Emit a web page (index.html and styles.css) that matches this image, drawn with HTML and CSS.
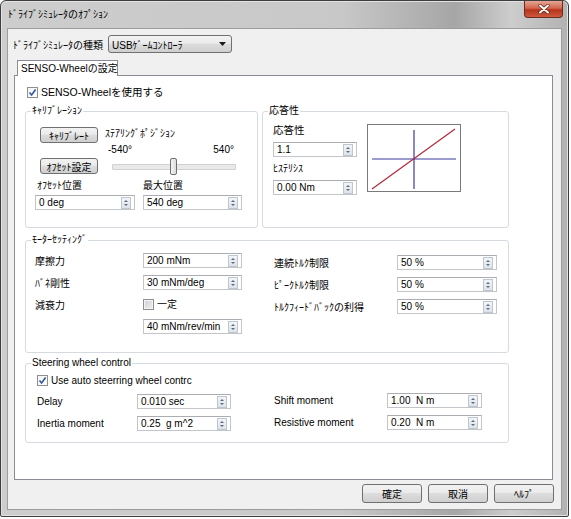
FILE: index.html
```html
<!DOCTYPE html>
<html lang="ja">
<head>
<meta charset="utf-8">
<title>ﾄﾞﾗｲﾌﾞｼﾐｭﾚｰﾀのｵﾌﾟｼｮﾝ</title>
<link rel="stylesheet" href="styles.css">
</head>
<body>
<div class="window">
  <div class="titlebar">
    <span class="title">ﾄﾞﾗｲﾌﾞｼﾐｭﾚｰﾀのｵﾌﾟｼｮﾝ</span>
    <div class="close">
      <svg width="12" height="10" viewBox="0 0 12 10"><path d="M2 1.5 L10 8.5 M10 1.5 L2 8.5" stroke="#5a1a10" stroke-width="3.2" stroke-linecap="round"/><path d="M2 1.5 L10 8.5 M10 1.5 L2 8.5" stroke="#ffffff" stroke-width="2" stroke-linecap="round"/></svg>
    </div>
  </div>
  <div class="client">
    <div class="type-row">
      <span class="type-label">ﾄﾞﾗｲﾌﾞｼﾐｭﾚｰﾀの種類</span>
      <div class="combo">
        <span>USBｹﾞｰﾑｺﾝﾄﾛｰﾗ</span>
        <svg width="7" height="4" viewBox="0 0 7 4"><path d="M0 0 L7 0 L3.5 4 z" fill="#1a1a1a"/></svg>
      </div>
    </div>
    <div class="tabs"><div class="tab">SENSO-Wheelの設定</div></div>
    <div class="panel">
      <div class="check main"><span class="box on"><svg width="9" height="9" viewBox="0 0 9 9"><path d="M1.5 4.5 L3.6 7 L7.6 1.5" fill="none" stroke="#2f56a6" stroke-width="1.6"/></svg></span>SENSO-Wheelを使用する</div>

      <div class="top-row">
        <div class="group calib">
          <span class="legend">ｷｬﾘﾌﾞﾚｰｼｮﾝ</span>
          <div class="calib-top">
            <div class="calib-btns">
              <div class="btn">ｷｬﾘﾌﾞﾚｰﾄ</div>
              <div class="btn">ｵﾌｾｯﾄ設定</div>
            </div>
            <div class="calib-pos">
              <div class="line">ｽﾃｱﾘﾝｸﾞﾎﾟｼﾞｼｮﾝ</div>
              <div class="line range"><span>-540°</span><span>540°</span></div>
              <div class="slider"><div class="thumb"></div></div>
            </div>
          </div>
          <div class="pair labels"><span>ｵﾌｾｯﾄ位置</span><span>最大位置</span></div>
          <div class="pair">
            <div class="spin"><span class="val">0 deg</span><span class="sb"></span></div>
            <div class="spin"><span class="val">540 deg</span><span class="sb"></span></div>
          </div>
        </div>

        <div class="group resp">
          <span class="legend">応答性</span>
          <div class="resp-body">
            <div class="resp-fields">
              <div class="line big">応答性</div>
              <div class="spin"><span class="val">1.1</span><span class="sb"></span></div>
              <div class="line hys">ﾋｽﾃﾘｼｽ</div>
              <div class="spin"><span class="val">0.00 Nm</span><span class="sb"></span></div>
            </div>
            <svg class="graph" width="94" height="68" viewBox="0 0 94 68">
              <rect x="0.5" y="0.5" width="93" height="67" fill="#fff" stroke="#7a7a7a"/>
              <line x1="47" y1="6" x2="47" y2="65" stroke="#3a3a9e" stroke-width="1.2"/>
              <line x1="5" y1="35" x2="89" y2="35" stroke="#3a3a9e" stroke-width="1.2"/>
              <line x1="5" y1="65" x2="88" y2="5" stroke="#b2283a" stroke-width="1.2"/>
            </svg>
          </div>
        </div>
      </div>

      <div class="group motor">
        <span class="legend">ﾓｰﾀｰｾｯﾃｨﾝｸﾞ</span>
        <div class="motor-body">
          <div class="grid motor-left">
            <span>摩擦力</span>
            <div class="spin"><span class="val">200 mNm</span><span class="sb"></span></div>
            <span>ﾊﾞﾈ剛性</span>
            <div class="spin"><span class="val">30 mNm/deg</span><span class="sb"></span></div>
            <span>減衰力</span>
            <div class="check small"><span class="box off"></span>一定</div>
            <span></span>
            <div class="spin"><span class="val">40 mNm/rev/min</span><span class="sb"></span></div>
          </div>
          <div class="grid motor-right">
            <span>連続ﾄﾙｸ制限</span>
            <div class="spin"><span class="val">50 %</span><span class="sb"></span></div>
            <span>ﾋﾟｰｸﾄﾙｸ制限</span>
            <div class="spin"><span class="val">50 %</span><span class="sb"></span></div>
            <span>ﾄﾙｸﾌｨｰﾄﾞﾊﾞｯｸの利得</span>
            <div class="spin"><span class="val">50 %</span><span class="sb"></span></div>
          </div>
        </div>
      </div>

      <div class="group steer">
        <span class="legend">Steering wheel control</span>
        <div class="check auto"><span class="box on"><svg width="9" height="9" viewBox="0 0 9 9"><path d="M1.5 4.5 L3.6 7 L7.6 1.5" fill="none" stroke="#2f56a6" stroke-width="1.6"/></svg></span>Use auto steerring wheel contrc</div>
        <div class="steer-body">
          <div class="grid steer-left">
            <span>Delay</span>
            <div class="spin"><span class="val">0.010 sec</span><span class="sb"></span></div>
            <span>Inertia moment</span>
            <div class="spin"><span class="val">0.25&nbsp; g m^2</span><span class="sb"></span></div>
          </div>
          <div class="grid steer-right">
            <span>Shift moment</span>
            <div class="spin"><span class="val">1.00&nbsp; N m</span><span class="sb"></span></div>
            <span>Resistive moment</span>
            <div class="spin"><span class="val">0.20&nbsp; N m</span><span class="sb"></span></div>
          </div>
        </div>
      </div>
    </div>
    <div class="buttons">
      <div class="btn">確定</div>
      <div class="btn">取消</div>
      <div class="btn">ﾍﾙﾌﾟ</div>
    </div>
  </div>
</div>
</body>
</html>
```

FILE: styles.css
```css
* { box-sizing: border-box; }
html, body { margin: 0; padding: 0; background: #ffffff; }
body {
  font-family: "Liberation Sans", "Noto Sans CJK JP", sans-serif;
  font-size: 10px;
  color: #000;
}

.window {
  width: 569px;
  height: 517px;
  border: 1px solid #3e3e3e;
  border-radius: 6px 6px 2px 2px;
  background: linear-gradient(90deg, #cdcdcd 0%, #c8c8c8 60%, #a6a6a6 80%, #cdcdcd 90%, #b2b2b2 100%);
  box-shadow: inset 0 0 0 1px #e2e2e2;
  padding: 0 6px 6px 6px;
  display: flex;
  flex-direction: column;
}

.titlebar {
  height: 27px;
  display: flex;
  justify-content: space-between;
  align-items: flex-start;
}
.title { line-height: 27px; margin-left: 1px; }
.close {
  width: 39px;
  height: 17px;
  margin-right: -1px;
  border: 1px solid #6e2a1e;
  border-top: none;
  border-radius: 0 0 4px 4px;
  background: linear-gradient(#e5a595, #d2674f 45%, #b8331c 55%, #cd5a3f);
  display: flex;
  align-items: center;
  justify-content: center;
}

.client {
  flex: 1;
  background: #f0f0f0;
  border: 1px solid #9c9c9c;
  display: flex;
  flex-direction: column;
}

.type-row {
  display: flex;
  align-items: center;
  margin-top: 6px;
  padding-left: 5px;
}
.type-label { width: 95px; white-space: nowrap; }
.combo {
  width: 124px;
  height: 18px;
  border: 1px solid #707070;
  border-radius: 3px;
  background: linear-gradient(#f3f3f3, #ebebeb 45%, #dddddd 50%, #cfcfcf);
  display: flex;
  align-items: center;
  justify-content: space-between;
  padding: 0 5px 0 3px;
}

.tabs { margin: 7px 0 0 9px; display: flex; }
.tab {
  position: relative;
  z-index: 1;
  width: 101px;
  height: 16px;
  margin-bottom: -1px;
  background: #ffffff;
  border: 1px solid #898c95;
  border-bottom: none;
  padding-left: 3px;
  line-height: 15px;
  white-space: nowrap;
}

.panel {
  height: 405px;
  margin: 0 8px 0 6px;
  background: #ffffff;
  border: 1px solid #898c95;
  padding-left: 10px;
  display: flex;
  flex-direction: column;
}

.check { display: flex; align-items: center; line-height: 13px; white-space: nowrap; }
.check.main { margin: 10px 0 0 2px; font-size: 10.5px; }
.box {
  width: 11px;
  height: 11px;
  border: 1px solid #8e8f8f;
  margin-right: 3px;
  display: flex;
  align-items: center;
  justify-content: center;
  background: linear-gradient(135deg, #f4f4f4, #ffffff);
}
.box.off { background: linear-gradient(135deg, #cfd1d4, #eeeeef); box-shadow: inset 0 0 0 1px #f4f4f4; }

.top-row { display: flex; gap: 4px; margin-top: 12px; }

.group {
  border: 1px solid #d5dbe0;
  border-radius: 3px;
  display: flex;
  flex-direction: column;
}
.legend {
  align-self: flex-start;
  margin: -8px 0 0 5px;
  padding: 0 1px;
  background: #ffffff;
  line-height: 14px;
  white-space: nowrap;
}

.calib { width: 233px; height: 117px; }
.calib-top { display: flex; gap: 7px; margin: 9px 0 0 14px; }
.calib-btns { width: 58px; display: flex; flex-direction: column; gap: 15px; }
.btn {
  height: 16px;
  border: 1px solid #707070;
  border-radius: 3px;
  background: linear-gradient(#f2f2f2, #ebebeb 45%, #dddddd 50%, #cfcfcf);
  display: flex;
  align-items: center;
  justify-content: center;
  white-space: nowrap;
}
.calib-pos { width: 131px; display: flex; flex-direction: column; }
.line { line-height: 14px; white-space: nowrap; }
.range { display: flex; justify-content: space-between; margin-top: 2px; padding: 0 2px 0 3px; }
.slider {
  margin: 7px 0 0 7px;
  width: 124px;
  height: 6px;
  border: 1px solid #d0d0d0;
  background: #e8eaea;
  border-radius: 1px;
}
.thumb {
  width: 7px;
  height: 17px;
  margin: -7px 0 0 57px;
  border: 1px solid #707070;
  border-radius: 2px;
  background: linear-gradient(90deg, #f4f4f4, #dcdcdc);
}
.pair { display: grid; grid-template-columns: 100px 99px; column-gap: 8px; margin-left: 9px; }
.pair.labels { margin-top: 5px; line-height: 14px; padding-left: 2px; }
.pair.labels span:last-child { margin-left: -2px; }
.pair.labels + .pair { margin-top: 2px; }

.spin {
  height: 15px;
  border: 1px solid #c2c5ca;
  border-top-color: #abadb3;
  background: #ffffff;
  display: flex;
  align-items: center;
  padding-left: 3px;
  white-space: nowrap;
}
.val { flex: 1; }
.sb {
  width: 10px;
  height: 12px;
  margin-right: 3px;
  border: 1px solid #bfc6cf;
  background: linear-gradient(#f2f5f8, #dde3ea);
  display: flex;
  flex-direction: column;
  align-items: center;
  justify-content: center;
  gap: 2px;
}
.sb::before, .sb::after {
  content: "";
  width: 0;
  height: 0;
  border-left: 2.5px solid transparent;
  border-right: 2.5px solid transparent;
}
.sb::before { border-bottom: 2.5px solid #5e6b80; }
.sb::after { border-top: 2.5px solid #5e6b80; }

.resp { width: 247px; height: 117px; }
.resp-body { display: flex; align-items: flex-start; gap: 10px; margin: 5px 0 0 10px; }
.resp-fields { width: 84px; display: flex; flex-direction: column; }
.resp-fields .big { font-size: 10.5px; }
.resp-fields .spin { margin-top: 5px; }
.resp-fields .hys { margin-top: 5px; }
.resp-fields .hys + .spin { margin-top: 4px; }
.graph { display: block; margin-top: 1px; }

.motor { width: 484px; height: 113px; margin-top: 12px; }
.motor-body { display: flex; gap: 32px; margin: 6px 0 0 9px; }
.grid { display: grid; row-gap: 7px; align-items: center; white-space: nowrap; }
.motor-left { grid-template-columns: 108px 99px; grid-auto-rows: 15px; }
.motor-right { grid-template-columns: 123px 100px; grid-auto-rows: 15px; margin-top: 2px; }
.check.small .box { margin-right: 3px; }

.steer { width: 484px; height: 80px; margin-top: 10px; }
.check.auto { margin: 4px 0 0 11px; }
.steer-body { display: flex; gap: 43px; margin: 7px 0 0 11px; }
.steer-left { grid-template-columns: 100px 94px; grid-auto-rows: 15px; }
.steer-right { grid-template-columns: 113px 95px; grid-auto-rows: 15px; margin-top: -1px; }

.buttons {
  display: flex;
  justify-content: flex-end;
  gap: 6px;
  margin-top: 4px;
  padding-right: 7px;
}
.buttons .btn { width: 60px; height: 19px; }
```
